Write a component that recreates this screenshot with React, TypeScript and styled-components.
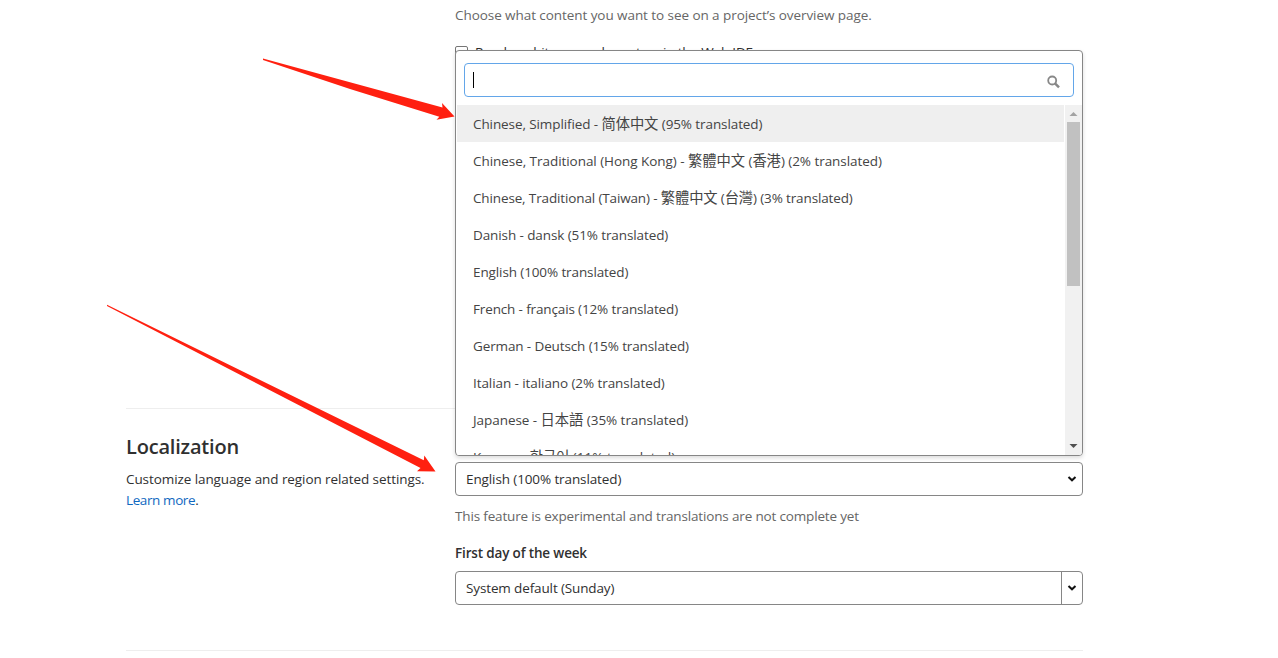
import React from "react";
import styled, { createGlobalStyle } from "styled-components";

const GlobalStyle = createGlobalStyle`
  * { box-sizing: border-box; }
  body {
    margin: 0;
    background: #fff;
    color: #303030;
    font: 13.5px/21px "Open Sans", "Noto Sans CJK SC", "Noto Sans CJK KR", sans-serif;
    overflow: hidden;
  }
`;

const Page = styled.main`
  position: relative;
  width: 1278px;
  height: 658px;
  padding: 0 195px 0 126px;
  overflow: hidden;
`;

const Section = styled.section<{ $height: number }>`
  display: grid;
  grid-template-columns: 329px 628px;
  height: ${(p) => p.$height}px;
  border-bottom: 1px solid #eee;
`;

const Column = styled.div`
  display: flex;
  flex-direction: column;
  align-items: flex-start;
`;

const Text = styled.span<{ $spacing?: number }>`
  white-space: nowrap;
  letter-spacing: ${(p) => p.$spacing ?? 0}px;
`;

const Native = styled.span`
  font-size: 14.3px;
  line-height: 1;
`;

const Help = styled.p`
  margin: 0;
  color: #666;
`;

const ContentHelp = styled(Help)`
  margin-top: 5px;
`;

const CheckRow = styled.label`
  display: flex;
  align-items: flex-start;
  margin-top: 16px;
`;

const CheckBox = styled.span`
  width: 13px;
  height: 13px;
  margin: 4px 7px 0 0;
  border: 1px solid #767676;
  border-radius: 2px;
`;

const Heading = styled.h4`
  margin: 26px 0 0;
  font-size: 20px;
  font-weight: 600;
  line-height: 24px;
`;

const Description = styled.p`
  margin: 10px 0 0;
`;

const Link = styled.a`
  color: #1068bf;
`;

const SelectWrap = styled.div`
  position: relative;
  width: 100%;
  margin-top: 53px;
`;

const SelectBox = styled.div<{ $divided?: boolean }>`
  display: flex;
  align-items: stretch;
  justify-content: space-between;
  width: 100%;
  height: 34px;
  padding-left: 10px;
  border: 1px solid #868686;
  border-radius: 4px;
  line-height: 32px;
  .arrow {
    display: flex;
    align-items: center;
    justify-content: center;
    width: 21px;
    border-left: 1px solid ${(p) => (p.$divided ? "#868686" : "transparent")};
  }
`;

const LanguageHelp = styled(Help)`
  margin-top: 10px;
`;

const Label = styled.div`
  margin: 16px 0 7px;
  font-weight: 600;
`;

const Dropdown = styled.div`
  position: absolute;
  bottom: 40px;
  left: 0;
  width: 628px;
  height: 406px;
  padding-top: 12px;
  overflow: hidden;
  background: #fff;
  border: 1px solid #868686;
  border-radius: 4px;
  box-shadow: 0 2px 4px rgba(0, 0, 0, 0.14);
`;

const Search = styled.div`
  display: flex;
  align-items: center;
  justify-content: space-between;
  height: 34px;
  margin: 0 8px 8px;
  padding: 0 12px 0 8px;
  border: 1px solid #63a6e9;
  border-radius: 4px;
  svg {
    margin-top: 4px;
  }
`;

const Caret = styled.span`
  width: 1px;
  height: 16px;
  background: #000;
`;

const Results = styled.div`
  display: flex;
  height: 350px;
  padding-left: 1px;
`;

const Options = styled.ul`
  flex: 1;
  margin: 0;
  padding: 0;
  overflow: hidden;
  list-style: none;
`;

const Option = styled.li<{ $active?: boolean }>`
  height: 37px;
  padding: 9px 16px 7px;
  color: #444;
  background: ${(p) => (p.$active ? "#efefef" : "#fff")};
`;

const ScrollBar = styled.div`
  display: flex;
  flex-direction: column;
  align-items: center;
  width: 17px;
  margin-left: 1px;
  background: #f1f1f1;
`;

const Thumb = styled.div`
  width: 13px;
  height: 164px;
  margin-bottom: auto;
  background: #c1c1c1;
`;

const ArrowLayer = styled.svg`
  position: absolute;
  top: 0;
  left: 0;
  pointer-events: none;
`;

const languages: { label: string; spacing: number }[] = [
  { label: "Chinese, Simplified - 简体中文 (95% translated)", spacing: -0.095 },
  { label: "Chinese, Traditional (Hong Kong) - 繁體中文 (香港) (2% translated)", spacing: -0.05 },
  { label: "Chinese, Traditional (Taiwan) - 繁體中文 (台灣) (3% translated)", spacing: -0.135 },
  { label: "Danish - dansk (51% translated)", spacing: -0.1 },
  { label: "English (100% translated)", spacing: -0.11 },
  { label: "French - français (12% translated)", spacing: -0.14 },
  { label: "German - Deutsch (15% translated)", spacing: -0.12 },
  { label: "Italian - italiano (2% translated)", spacing: -0.08 },
  { label: "Japanese - 日本語 (35% translated)", spacing: -0.05 },
  { label: "Korean - 한국어 (11% translated)", spacing: 0.02 },
];

const nativeScript = /([\u3400-\u9fff\uac00-\ud7af]+)/;

const LanguageName = ({ label }: { label: string }) => (
  <>
    {label.split(nativeScript).map((part, i) =>
      i % 2 ? <Native key={i}>{part}</Native> : <React.Fragment key={i}>{part}</React.Fragment>
    )}
  </>
);

const Chevron = () => (
  <svg width="10" height="8" viewBox="0 0 10 8">
    <path d="M1.5 2 L5 5.3 L8.5 2" fill="none" stroke="#111" strokeWidth="2" />
  </svg>
);

const ScrollArrow = ({ up }: { up?: boolean }) => (
  <svg width="17" height="17" viewBox="0 0 17 17">
    <path d={up ? "M4.5 11 L8.5 7 L12.5 11Z" : "M4.5 6 L8.5 10 L12.5 6Z"} fill={up ? "#a3a3a3" : "#505050"} />
  </svg>
);

const SearchIcon = () => (
  <svg width="14" height="14" viewBox="0 0 14 14" fill="none" stroke="#888">
    <circle cx="5.2" cy="5.5" r="4" strokeWidth="1.8" />
    <path d="M8 8.3 L12 12.3" strokeWidth="2.4" />
  </svg>
);

export default function App() {
  return (
    <>
      <GlobalStyle />
      <Page>
        <Section $height={409}>
          <div />
          <Column>
            <ContentHelp>
              <Text $spacing={-0.065}>Choose what content you want to see on a project’s overview page.</Text>
            </ContentHelp>
            <CheckRow>
              <CheckBox />
              <Text $spacing={-0.17}>Render whitespace characters in the Web IDE</Text>
            </CheckRow>
          </Column>
        </Section>
        <Section $height={242}>
          <Column>
            <Heading>
              <Text $spacing={-0.2}>Localization</Text>
            </Heading>
            <Description>
              <Text $spacing={-0.08}>Customize language and region related settings.</Text>
              <br />
              <Text $spacing={-0.4}>
                <Link>Learn more</Link>.
              </Text>
            </Description>
          </Column>
          <Column>
            <SelectWrap>
              <SelectBox>
                <Text $spacing={-0.11}>English (100% translated)</Text>
                <span className="arrow">
                  <Chevron />
                </span>
              </SelectBox>
              <Dropdown>
                <Search>
                  <Caret />
                  <SearchIcon />
                </Search>
                <Results>
                  <Options>
                    {languages.map((l, i) => (
                      <Option key={l.label} $active={i === 0}>
                        <Text $spacing={l.spacing}>
                          <LanguageName label={l.label} />
                        </Text>
                      </Option>
                    ))}
                  </Options>
                  <ScrollBar>
                    <ScrollArrow up />
                    <Thumb />
                    <ScrollArrow />
                  </ScrollBar>
                </Results>
              </Dropdown>
            </SelectWrap>
            <LanguageHelp>
              <Text $spacing={-0.16}>This feature is experimental and translations are not complete yet</Text>
            </LanguageHelp>
            <Label>
              <Text $spacing={-0.16}>First day of the week</Text>
            </Label>
            <SelectBox $divided>
              <Text $spacing={-0.13}>System default (Sunday)</Text>
              <span className="arrow">
                <Chevron />
              </span>
            </SelectBox>
          </Column>
        </Section>
        <ArrowLayer width="1278" height="658" fill="#ff2010">
          <path d="M263 58.5 L442.5 107.5 L442 103 L454.5 116.6 L436.5 119.7 L439.3 116.8 L350 89 L263 60Z" />
          <path d="M107 304.8 L423.8 460.3 L424.3 455.5 L435.5 471.5 L417 471.2 L420.5 468 L107 306Z" />
        </ArrowLayer>
      </Page>
    </>
  );
}
